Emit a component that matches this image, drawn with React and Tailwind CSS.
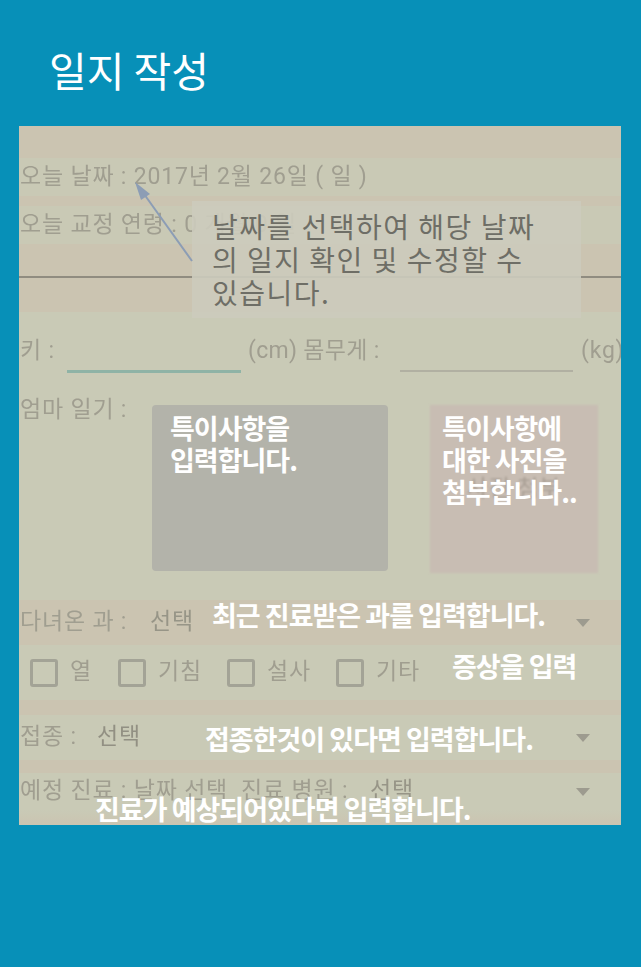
const appFont = { fontFamily: 'Roboto, "Noto Sans CJK KR", sans-serif' }
const noteFont = { fontFamily: '"Noto Sans CJK KR", sans-serif' }

const Triangle = () => (
  <svg width="16" height="10" viewBox="0 0 16 10" className="shrink-0">
    <path d="M1 1 L15 1 L8 9 Z" fill="#9d9b8f" />
  </svg>
)

const Check = ({ label, className }) => (
  <div className={`flex items-center gap-[12px] ${className}`}>
    <div className="w-[28px] h-[28px] border-[3px] border-[#a3a396] rounded-[3px]" />
    <span>{label}</span>
  </div>
)

const Note = ({ className, children }) => (
  <div
    className={`absolute text-white font-bold text-[27px] leading-[32px] tracking-[-1px] ${className}`}
    style={noteFont}
  >
    {children}
  </div>
)

export default function App() {
  return (
    <div className="w-[641px] h-[967px] bg-[#0790b8] flex flex-col">
      <div className="h-[126px] pl-[49px] pt-[44px]">
        <h1 className="text-white text-[41px] leading-[50px]" style={noteFont}>일지 작성</h1>
      </div>

      <div className="relative ml-[19px] w-[602px] h-[699px] overflow-hidden flex flex-col text-[#a09e90] text-[23px] tracking-[0.8px]" style={appFont}>
        <div className="h-[32px] bg-[#cbc4b1]" />
        <div className="h-[38px] bg-[#c9c9b5] flex items-center pl-[1px] blur-[0.6px]">오늘 날짜 : 2017년 2월 26일 ( 일 )</div>
        <div className="h-[10px] bg-[#cbc4b1]" />
        <div className="h-[38px] bg-[#c9c9b5] flex items-center pl-[1px] blur-[0.6px]">오늘 교정 연령 : 0 개월 0 일</div>
        <div className="h-[68px] bg-[#cbc4b1] pt-[32px]">
          <div className="h-[2px] bg-[#908c80]" />
        </div>

        <div className="h-[288px] bg-[#c9cab6] flex flex-col">
          <div className="flex items-end h-[62px] pl-[1px] blur-[0.6px] whitespace-nowrap">
            <span className="w-[47px] shrink-0 mb-[6px]">키 :</span>
            <div className="w-[174px] shrink-0 h-[3px] bg-[#8fb3a6] mb-[1px]" />
            <span className="w-[159px] shrink-0 pl-[7px] mb-[6px] tracking-[0.3px]">(cm) 몸무게 :</span>
            <div className="w-[173px] shrink-0 h-[2px] bg-[#b1b0a2] mb-[2px]" />
            <span className="ml-[8px] mb-[6px]">(kg)</span>
          </div>
          <div className="flex pt-[31px] pl-[1px]">
            <span className="w-[132px] -mt-[12px] blur-[0.6px]">엄마 일기 :</span>
            <div className="w-[236px] h-[166px] bg-[#b3b3aa] rounded-[4px]" />
            <div className="ml-[42px] w-[168px] h-[168px] bg-[#c8bdb3] flex items-center justify-center text-[#a89e94] blur-[0.8px]">
              사진 첨부
            </div>
          </div>
        </div>

        <div className="h-[45px] bg-[#cbc4b1] flex items-center pl-[1px] pr-[30px] blur-[0.5px]">
          <span className="w-[130px]">다녀온 과 :</span>
          <span className="text-[#979587]">선택</span>
          <div className="flex-1" />
          <Triangle />
        </div>
        <div className="h-[55px] bg-[#c9cab6] flex items-center pl-[11px] blur-[0.5px]">
          <Check label="열" className="w-[88px]" />
          <Check label="기침" className="w-[109px]" />
          <Check label="설사" className="w-[109px]" />
          <Check label="기타" />
        </div>
        <div className="h-[15px] bg-[#cbc4b1]" />
        <div className="h-[45px] bg-[#c9cab6] flex items-center pl-[1px] pr-[30px] blur-[0.5px]">
          <span className="w-[77px]">접종 :</span>
          <span className="text-[#929083]">선택</span>
          <div className="flex-1" />
          <Triangle />
        </div>
        <div className="h-[13px] bg-[#cbc4b1]" />
        <div className="h-[37px] bg-[#c9cab6] flex items-center pl-[1px] pr-[30px] blur-[0.5px] whitespace-nowrap">
          <span className="w-[350px] overflow-hidden">예정 진료 : 날짜 선택&nbsp; 진료 병원 :</span>
          <span className="text-[#979587]">선택</span>
          <div className="flex-1" />
          <Triangle />
        </div>
        <div className="flex-1 bg-gradient-to-b from-[#c9cab6] to-[#cbc4b1]" />

        {/* tutorial overlay */}
        <div className="absolute left-[173px] top-[75px] w-[389px] h-[117px] bg-[#cccbbd]/90 pl-[20px] pt-[9px] text-[#6e6e66] text-[28px] leading-[33px] tracking-[1.5px]" style={noteFont}>
          날짜를 선택하여 해당 날짜<br />의 일지 확인 및 수정할 수<br />있습니다.
        </div>
        <svg className="absolute left-0 top-0" width="602" height="699">
          <line x1="173" y1="135" x2="125" y2="68" stroke="#8c9db5" strokeWidth="2" />
          <path d="M116 56 L131 68 L122 74 Z" fill="#8c9db5" />
        </svg>

        <Note className="left-[151px] top-[286px]">특이사항을<br />입력합니다.</Note>
        <Note className="left-[423px] top-[286px]">특이사항에<br />대한 사진을<br />첨부합니다..</Note>
        <Note className="left-[193px] top-[473px]">최근 진료받은 과를 입력합니다.</Note>
        <Note className="left-[433px] top-[524px]">증상을 입력</Note>
        <Note className="left-[186px] top-[597px]">접종한것이 있다면 입력합니다.</Note>
        <Note className="left-[76px] top-[667px]">진료가 예상되어있다면 입력합니다.</Note>
      </div>
    </div>
  )
}
